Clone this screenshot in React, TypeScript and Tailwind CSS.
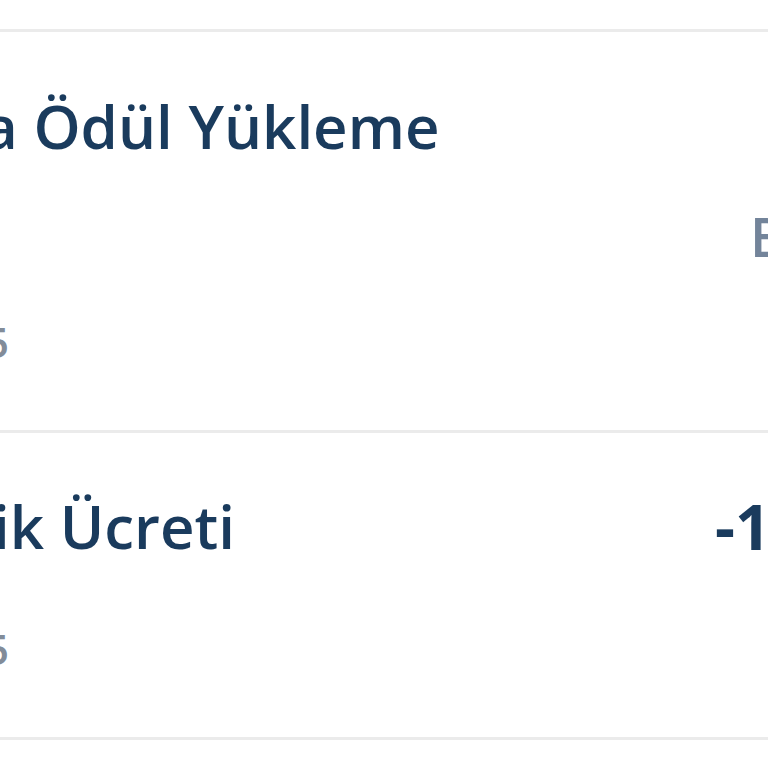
const rows = [
  {
    title: 'a Ödül Yükleme',
    titleOffset: '-ml-[17px]',
    amount: '',
    status: 'Bekliyor',
    date: '5',
  },
  {
    title: 'ik Ücreti',
    titleOffset: '-ml-[7px]',
    amount: '-10,00 TL',
    status: '',
    date: '5',
  },
];

function Divider() {
  return <div className="h-[3px] w-full bg-[#ebebeb]" />;
}

export default function App() {
  return (
    <div className="w-[768px] h-[768px] overflow-hidden bg-white font-['Open_Sans',sans-serif]">
      <div className="h-[29px]" />
      <Divider />

      {/* first transaction */}
      <div className="flex flex-col pt-[50px] pb-[60px]">
        <div className="flex items-start">
          <span className={`flex-1 whitespace-nowrap text-[60px] leading-[88px] font-semibold text-[#1a3b5d] ${rows[0].titleOffset}`}>
            {rows[0].title}
          </span>
          <span className="w-[53px] shrink-0 whitespace-nowrap text-[60px] leading-[88px] font-bold text-[#1a3b5d]">
            {rows[0].amount}
          </span>
        </div>
        <div className="flex mt-[30px]">
          <span className="flex-1" />
          <span className="w-[18px] shrink-0 whitespace-nowrap text-[54px] leading-[72px] font-semibold text-[#73849a]">
            {rows[0].status}
          </span>
        </div>
        <div className="mt-[42px] -ml-[15px] whitespace-nowrap text-[42px] leading-[56px] font-semibold text-[#828c99]">
          {rows[0].date}
        </div>
      </div>
      <Divider />

      {/* second transaction */}
      <div className="flex flex-col pt-[49px] pb-[60px]">
        <div className="flex items-start">
          <span className={`flex-1 whitespace-nowrap text-[60px] leading-[88px] font-semibold text-[#1a3b5d] ${rows[1].titleOffset}`}>
            {rows[1].title}
          </span>
          <span className="w-[53px] shrink-0 whitespace-nowrap text-[62px] leading-[88px] font-bold text-[#1a3b5d]">
            {rows[1].amount}
          </span>
        </div>
        <div className="mt-[51px] -ml-[15px] whitespace-nowrap text-[42px] leading-[56px] font-semibold text-[#828c99]">
          {rows[1].date}
        </div>
      </div>
      <Divider />
    </div>
  );
}
